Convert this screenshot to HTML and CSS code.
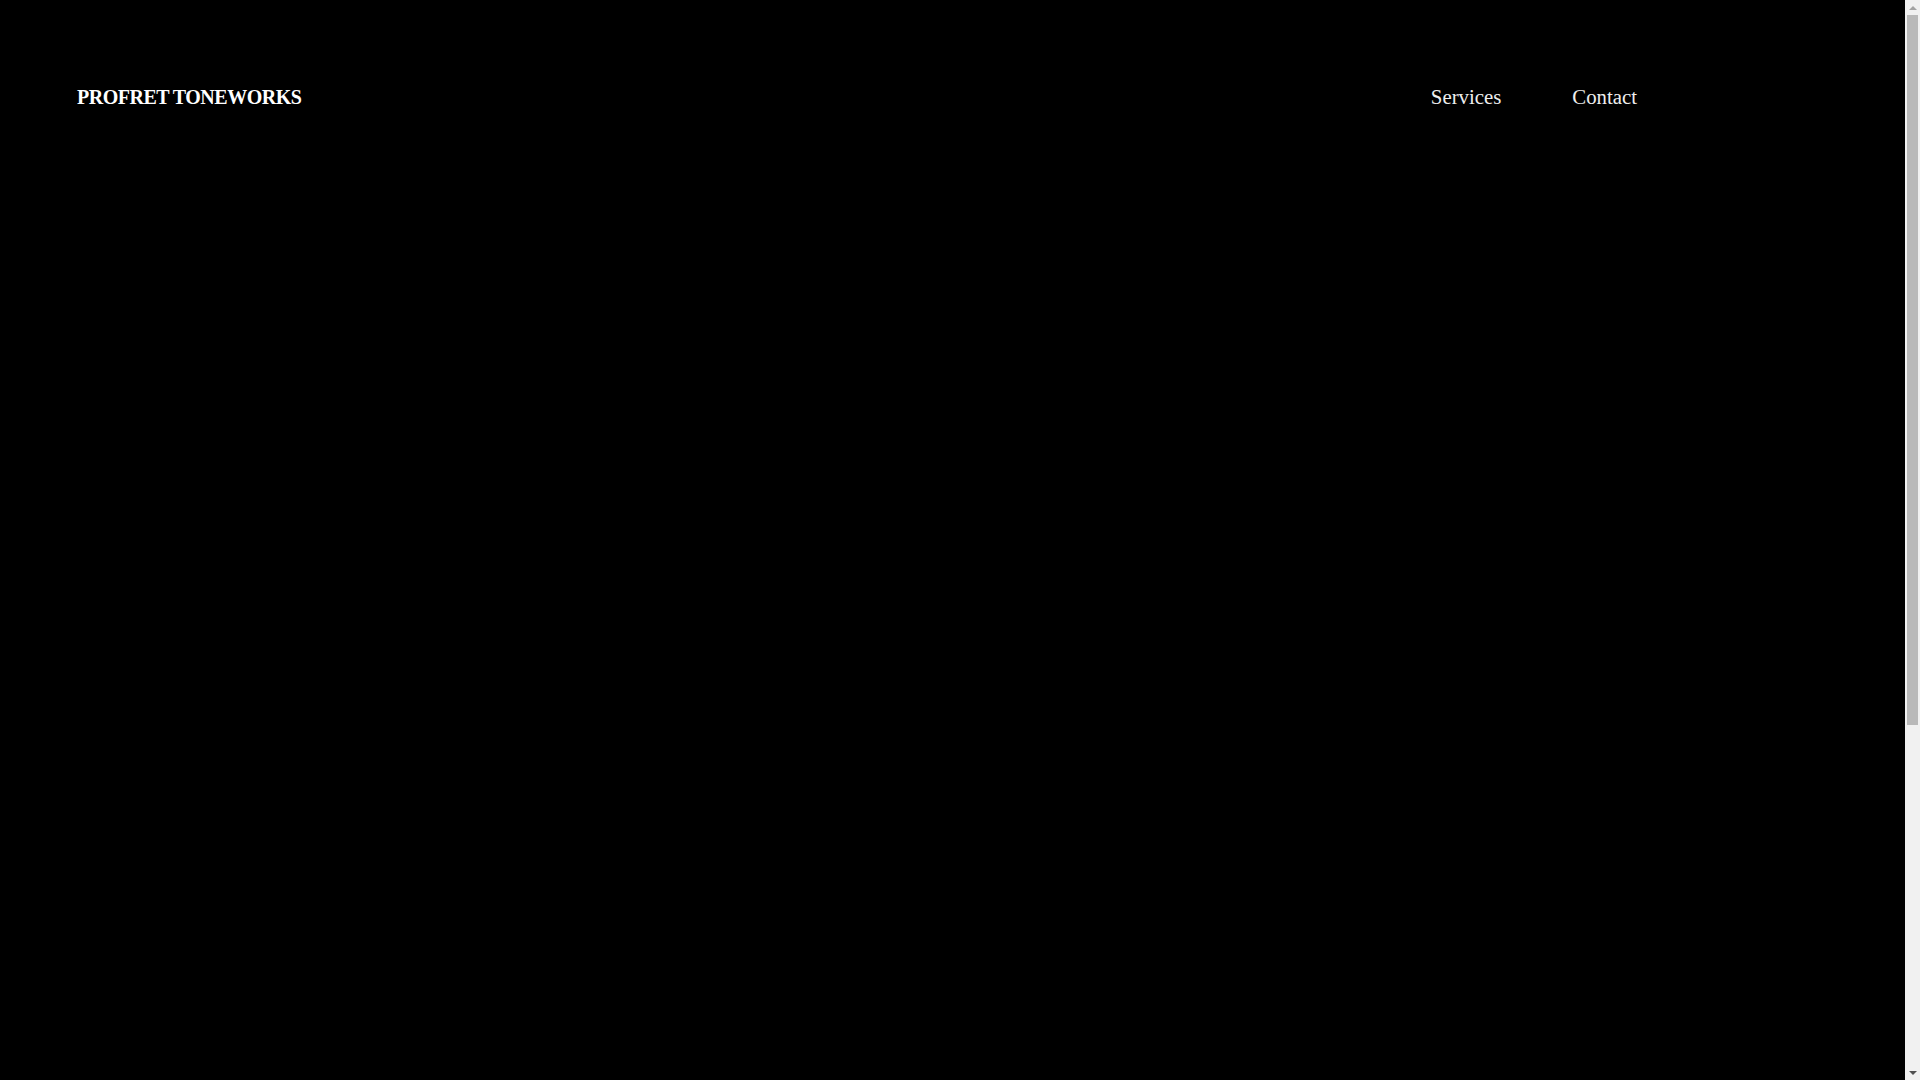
FILE: index.html
```html
<!DOCTYPE html>
<html lang="en">
<head>
<meta charset="utf-8">
<title>Profret Toneworks</title>
<link rel="stylesheet" href="styles.css">
</head>
<body>
<header class="site-header">
  <a class="logo" href="#">PROFRET TONEWORKS</a>
  <nav class="nav">
    <a class="nav-link" href="#">Services</a>
    <a class="nav-link" href="#">Contact</a>
  </nav>
</header>
<main class="content"></main>
<div class="fake-scrollbar" aria-hidden="true">
  <span class="sb-arrow sb-up"></span>
  <span class="sb-track"><span class="sb-thumb"></span></span>
  <span class="sb-arrow sb-down"></span>
</div>
</body>
</html>
```
FILE: styles.css
```css
html, body {
  margin: 0;
  padding: 0;
  background: #000;
}
body {
  font-family: "Liberation Serif", "Times New Roman", serif;
  color: #fff;
}
.site-header {
  height: 194px;
  display: flex;
  align-items: center;
  justify-content: space-between;
  padding: 0 283px 0 77px;
}
.logo {
  color: #fff;
  text-decoration: none;
  font-weight: 700;
  font-size: 20px;
  letter-spacing: -0.5px;
}
.nav {
  display: flex;
  gap: 71px;
}
.nav-link {
  color: #eeeeee;
  text-decoration: none;
  font-size: 20.8px;
}
.content {
  min-height: 1406px;
}
.fake-scrollbar {
  position: fixed;
  top: 0;
  right: 0;
  width: 15px;
  height: 100vh;
  background: #f1f1f1;
  display: flex;
  flex-direction: column;
}
.sb-arrow {
  height: 15px;
  flex: none;
  display: flex;
  align-items: center;
  justify-content: center;
}
.sb-up::before {
  content: "";
  border-left: 4px solid transparent;
  border-right: 4px solid transparent;
  border-bottom: 4px solid #a3a3a3;
}
.sb-down::before {
  content: "";
  border-left: 4px solid transparent;
  border-right: 4px solid transparent;
  border-top: 4px solid #505050;
}
.sb-track {
  flex: 1;
  padding: 0 2px;
}
.sb-thumb {
  display: block;
  height: 710px;
  background: #b9b9b9;
}
```
